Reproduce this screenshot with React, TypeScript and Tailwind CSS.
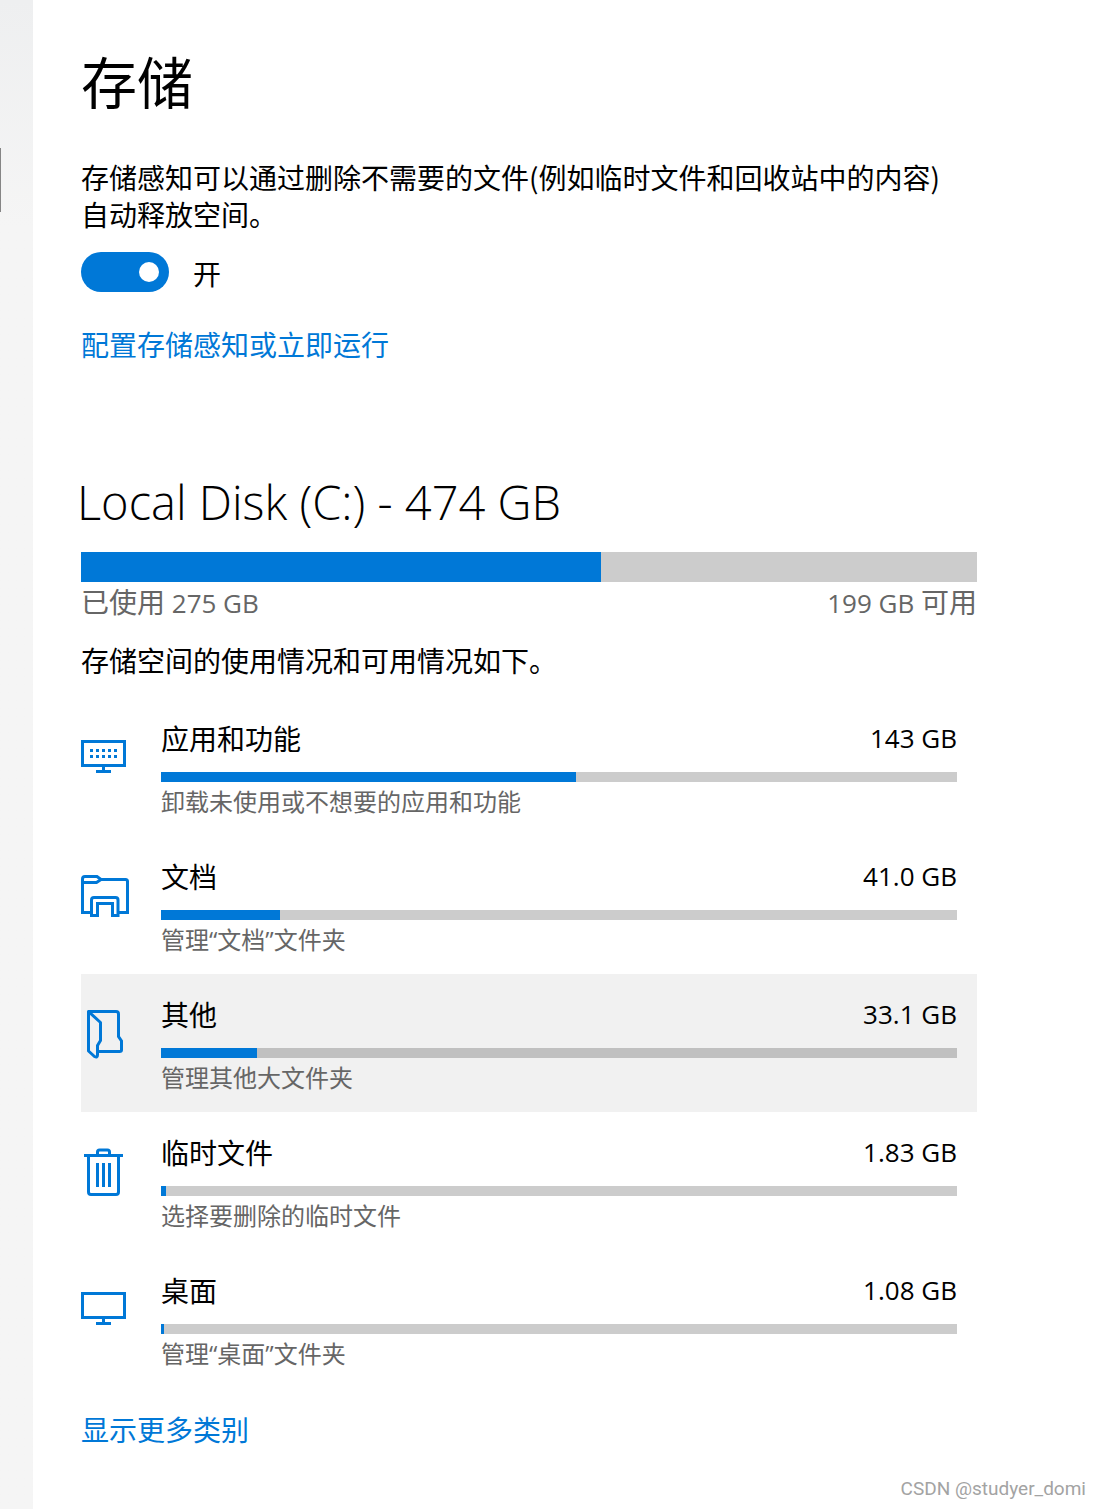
import React, { useState } from 'react';

type IconName = 'apps' | 'documents' | 'folder' | 'trash' | 'desktop';

interface Category {
  name: string;
  icon: IconName;
  used: number;
  size: string;
  hint: string;
  hovered?: boolean;
}

const DISK_TOTAL = 474;
const DISK_USED = 275;

const categories: Category[] = [
  { name: '应用和功能', icon: 'apps', used: 143.4, size: '143 GB', hint: '卸载未使用或不想要的应用和功能' },
  { name: '文档', icon: 'documents', used: 41, size: '41.0 GB', hint: '管理“文档”文件夹' },
  { name: '其他', icon: 'folder', used: 33.1, size: '33.1 GB', hint: '管理其他大文件夹', hovered: true },
  { name: '临时文件', icon: 'trash', used: 1.83, size: '1.83 GB', hint: '选择要删除的临时文件' },
  { name: '桌面', icon: 'desktop', used: 1.08, size: '1.08 GB', hint: '管理“桌面”文件夹' },
];

const CategoryIcon: React.FC<{ name: IconName }> = ({ name }) => {
  const renderShape = () => {
    switch (name) {
      case 'apps':
        return (
          <>
            <path d="M1.5 7.5h42v24h-42zM22.5 33v3M15 37.5h15" />
            <path d="M9 16.5h29M9 22.5h29" strokeDasharray="3 3" />
          </>
        );
      case 'documents':
        return (
          <>
            <path d="M12 40.5H1.5V7q0-2.5 2.5-2.5H16l4 3h24.5q2 0 2 2v31H36" />
            <path d="M1.5 10.5H15.5l4.5-3" />
            <path d="M10.5 43.5V28q0-2.5 2.5-2.5H34.5q2.5 0 2.5 2.5v15.5H31.5V31.5H16.5v12z" />
          </>
        );
      case 'folder':
        return (
          <>
            <path d="M8 1.5H35q2.5 0 2.5 2.5V26.5l3 4.5v9q0 1.5-2 1.5H17" />
            <path d="M7.5 1.5v39.5l6 5.5q3 1.5 3-1.5V35.5l3-5V12.5z" strokeLinejoin="round" />
          </>
        );
      case 'trash':
        return (
          <>
            <path d="M3 7.5h39M16.5 7.5V4q0-2 2-2h8q2 0 2 2v3.5" />
            <path d="M7.5 7.5V44q0 2.5 2.5 2.5h25q2.5 0 2.5-2.5V7.5" />
            <path d="M16.5 15v24M22.5 15v24M28.5 15v24" />
          </>
        );
      case 'desktop':
        return <path d="M1.5 7.5h42v24h-42zM22.5 33v3M15 37.5h15" />;
    }
  };

  return (
    <svg className="w-12 h-[52px] shrink-0" viewBox="0 0 48 52" fill="none" stroke="#0078d7" strokeWidth="3" aria-hidden="true">
      {renderShape()}
    </svg>
  );
};

const UsageBar: React.FC<{ label: string; value: number; max: number; className: string }> = ({ label, value, max, className }) => (
  <div role="meter" aria-label={label} aria-valuenow={value} aria-valuemin={0} aria-valuemax={max} className={className}>
    <div className="h-full bg-[#0078d7]" style={{ width: `${(value / max) * 100}%` }} />
  </div>
);

const CategoryRow: React.FC<{ item: Category }> = ({ item }) => (
  <li>
    <a href="#" className={`flex gap-8 h-[138px] pt-5 pr-5 ${item.hovered ? 'bg-[#f1f1f1]' : 'hover:bg-[#f1f1f1]'}`}>
      <div className="pt-4">
        <CategoryIcon name={item.icon} />
      </div>
      <div className="flex-1">
        <div className="flex justify-between leading-[42px]">
          <span className="text-[28px]">{item.name}</span>
          <span className="text-[26px] leading-10">{item.size}</span>
        </div>
        <UsageBar
          label={item.name}
          value={item.used}
          max={DISK_USED}
          className={`mt-3 h-2.5 ${item.hovered ? 'bg-[#c0c0c0]' : 'bg-[#cccccc]'}`}
        />
        <p className="text-2xl leading-10 text-[#666666]">{item.hint}</p>
      </div>
    </a>
  </li>
);

const App: React.FC = () => {
  const [senseOn, setSenseOn] = useState(true);

  return (
    <div className="flex min-h-screen bg-white text-black font-['Open_Sans','Noto_Sans_CJK_SC',sans-serif]">
      <aside className="w-[33px] shrink-0 bg-linear-to-b from-[#eeeff0] via-[#f5f5f5] via-15% to-[#f5f5f5]">
        <div className="mt-[148px] w-px h-16 bg-[#858585]" />
      </aside>

      <div className="flex-1 flex flex-col">
        <main className="flex-1 w-full max-w-[944px] pl-12 pt-11" lang="zh-CN">
          <h1 className="text-[56px] leading-[72px] font-['Noto_Sans_CJK_SC',sans-serif]">存储</h1>

          <p className="mt-[43px] pr-5 text-[28px] leading-[37px] font-['Noto_Sans_CJK_SC',sans-serif]">
            存储感知可以通过删除不需要的文件(例如临时文件和回收站中的内容)自动释放空间。
          </p>
          <label className="mt-[19px] flex items-center gap-6 w-fit h-10">
            <input
              type="checkbox"
              role="switch"
              checked={senseOn}
              onChange={(e) => setSenseOn(e.target.checked)}
              className="appearance-none flex items-center w-22 h-10 px-2.5 rounded-full bg-[#999999] checked:bg-[#0078d7] checked:justify-end before:block before:size-5 before:rounded-full before:bg-white"
            />
            <span className="pt-1 text-[28px]">{senseOn ? '开' : '关'}</span>
          </label>
          <a href="#" className="block w-fit mt-8 text-[28px] leading-[42px] text-[#0078d7]">配置存储感知或立即运行</a>

          <h2 className="mt-26 -ml-1 text-[47px] leading-[64px] font-light">Local Disk (C:) - 474 GB</h2>
          <UsageBar label="Local Disk (C:)" value={DISK_USED} max={DISK_TOTAL} className="mt-[18px] h-[30px] bg-[#cccccc]" />
          <div className="flex justify-between text-[26px] leading-10 text-[#666666]">
            <span><span className="text-[28px]">已使用</span> 275 GB</span>
            <span>199 GB <span className="text-[28px]">可用</span></span>
          </div>
          <p className="mt-[18px] text-[28px] leading-10">存储空间的使用情况和可用情况如下。</p>

          <ul className="mt-[17px]">
            {categories.map((item) => (
              <CategoryRow key={item.name} item={item} />
            ))}
          </ul>

          <a href="#" className="block w-fit mt-[22px] text-[28px] leading-10 text-[#0078d7]">显示更多类别</a>
        </main>

        <footer className="px-3.5 pb-2 text-right text-[19px] leading-6 text-[#a3a3a3] font-['Roboto',sans-serif]">
          CSDN @studyer_domi
        </footer>
      </div>
    </div>
  );
};

export default App;
